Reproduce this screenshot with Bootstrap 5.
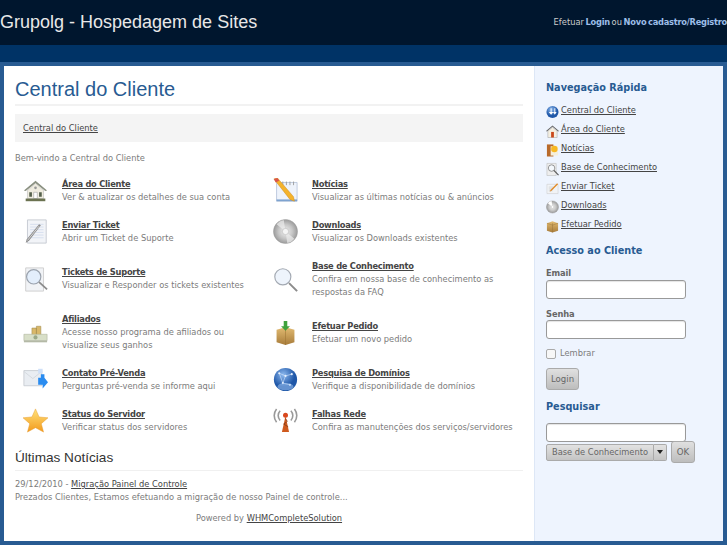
<!DOCTYPE html>
<html lang="pt"><head><meta charset="utf-8"><title>Grupolg</title>
<link href="https://cdn.jsdelivr.net/npm/bootstrap@5.3.0/dist/css/bootstrap.min.css" rel="stylesheet">
<style>
html,body{height:100%}
body{margin:0;width:727px;height:545px;overflow:hidden;background:#285b92;font:8.3px/13px "DejaVu Sans",sans-serif;color:#7c7c7c}
a{color:#444;text-decoration:underline}
.top-bar{height:45px;background:#00162e;color:#ccc}
.brand-name{font:18px/1 "Liberation Sans",sans-serif;color:#e8e8e8;margin:0 0 2px}
.top-login{word-spacing:-1px}
.top-login a{color:#9cbde8;font-weight:700;text-decoration:none;letter-spacing:-.25px}
.nav-band{height:17px;background:#003366}
.page-wrap{height:479px;margin:0 4px;border-top:4px solid #285b92}
.main-pane{width:530px;background:#fff;padding:0 11px}
.side-pane{width:189px;background:#eef4fe;border-left:1px solid #dde7f6;padding:0 0 0 11px}
.page-title{font:20px/24px "Liberation Sans",sans-serif;color:#285b92;margin:0;padding:11px 0 5px;border-bottom:2px solid #f2f2f2;height:40px}
.crumb-box{height:28px;margin-top:8px;background:#f4f4f4;padding:7px 8px;line-height:14px}
.welcome{margin:9px 0 0;height:14px;line-height:14px}
.link-grid{display:grid;grid-template-columns:250px 258px;margin-top:5px;height:271px;grid-template-rows:41px 41px 54px 53px 41px 41px}
.link-cell{display:flex;align-items:center}
.big-ico{width:40px;margin-right:7px;display:flex;justify-content:center;flex:none}
.big-ico svg{width:25px;height:25px}
.link-cell a{font-weight:700;display:block;letter-spacing:-.25px}
.link-cell p{margin:0}
.news-head{font:13.6px/20px "Liberation Sans",sans-serif;color:#333;margin:7px 0 0;height:23px;border-bottom:1px solid #f0f0f0}
.news-body{margin-top:7px}
.news-body p{margin:0}
.foot-line{text-align:center;margin-top:8px}
.side-title{font-size:9.7px;line-height:14px;font-weight:700;color:#285b92;margin:0}
.head-nav{margin-top:15px}
.head-login{margin-top:10px}
.head-search{margin-top:10px}
.quick-links{margin:6px 0 0;padding:0;list-style:none}
.quick-links li{height:19px;display:flex;align-items:center;gap:2px}
.quick-links svg{width:13px;height:14px;flex:none;margin-top:2px}
.field-lab{display:block;font-weight:700;color:#666;margin:8px 0 0;padding-top:1px;line-height:12px;letter-spacing:-.1px}
.field-box{display:block;width:140px;height:19px;border:1px solid #999;border-radius:3px;background:#fff;padding:0 3px;box-shadow:inset 0 1px 1px #e4e4e4}
.email-box{margin-top:1px}
.check-row{margin-top:8px;height:13px}
.fake-check{width:10px;height:10px;border:1px solid #aaa;border-radius:2px;background:#f7f7f7;flex:none;appearance:none;margin:0}
.grey-btn{background:linear-gradient(#e0e0e0,#bdbdbd);border:1px solid #aaa;border-radius:3px;color:#666;font:8.6px "DejaVu Sans",sans-serif;padding:0;height:22px}
.login-btn{width:33px;margin-top:8px}
.ok-btn{width:24px}
.search-form{margin-top:9px}
.sel-line{margin-top:-1px}
.sel-wrap{display:flex;width:121px;height:17px}
.sel-box{appearance:none;flex:1;min-width:0;border:1px solid #aaa;border-radius:2px 0 0 2px;background:linear-gradient(#e2e2e2,#c4c4c4);color:#666;font:8.3px "DejaVu Sans",sans-serif;padding:0 0 0 5px}
.sel-arrow{width:13px;border:1px solid #aaa;border-left:0;border-radius:0 2px 2px 0;background:linear-gradient(#e2e2e2,#c4c4c4);display:flex;align-items:center;justify-content:center}
.sel-arrow i{border:3px solid transparent;border-top:4px solid #222;border-bottom:0}
</style></head>
<body>
<svg width="0" height="0" class="position-absolute">
<defs>
<linearGradient id="gs" x1="0" y1="0" x2="0" y2="1"><stop offset="0" stop-color="#ffe27a"/><stop offset="1" stop-color="#f39a1c"/></linearGradient>
<radialGradient id="gg" cx=".4" cy=".3"><stop offset="0" stop-color="#8db9ee"/><stop offset="1" stop-color="#1f57a8"/></radialGradient>
<radialGradient id="gc" cx=".5" cy=".5"><stop offset="0" stop-color="#f2f2f2"/><stop offset=".6" stop-color="#c4c4c4"/><stop offset="1" stop-color="#9b9b9b"/></radialGradient>
<linearGradient id="gb" x1="0" y1="0" x2="0" y2="1"><stop offset="0" stop-color="#e2bb72"/><stop offset="1" stop-color="#a87c3a"/></linearGradient>
<symbol id="i-house" viewBox="0 0 28 28"><path d="M1 14 14 3l13 11-2 .5L14 6 3 14.500z" fill="#8a9080"/><path d="M5 14l9-8 9 8v9H5z" fill="#efecdf" stroke="#aaa" stroke-width=".5"/><path d="M12 16h4v7h-4z" fill="#fff" stroke="#888" stroke-width=".5"/><path d="M7 16h3v5H7zM18 16h3v5h-3z" fill="#55604c"/><circle cx="14" cy="11" r="1.500" fill="#999"/><path d="M3 23h22v3H3z" fill="#6b7250"/></symbol>
<symbol id="i-ticket" viewBox="0 0 28 28"><path d="M5 1h21v26H5z" fill="#f2f4f8" stroke="#c4c8d0"/><path d="M8 6h15M8 9h15M8 12h15M8 15h15M8 18h15M8 21h15" stroke="#cbd6ea" stroke-width=".8"/><path d="M20 7 7 24l-4 3 1-4L18 6z" fill="#8d8d8d"/><path d="M18 8 5 24" stroke="#ddd"/></symbol>
<symbol id="i-support" viewBox="0 0 28 28"><path d="M3 1h20v26H3z" fill="#f1f3f6" stroke="#ccc"/><circle cx="12" cy="11" r="8" fill="#e3eefb" stroke="#9aa2ad" stroke-width="1.3"/><path d="m18 17 9 8" stroke="#8b8b8b" stroke-width="2"/></symbol>
<symbol id="i-money" viewBox="0 0 28 28"><path d="M10 9h5v9h-5zM15 7h5v11h-5z" fill="#d9b86a" stroke="#a08b4e" stroke-width=".6"/><path d="M1 16h26v7H1z" fill="#d8dfc8" stroke="#a8ae98" stroke-width=".6"/><circle cx="14" cy="19.500" r="2.300" fill="#9aa887"/><path d="M1 23h26v2H1z" fill="#b4b9a6"/></symbol>
<symbol id="i-mail" viewBox="0 0 28 28"><path d="M1 4h20v17H1z" fill="#e9edf2" stroke="#c8ccd2"/><path d="M1 5l10 8 10-8" fill="none" stroke="#d2d6dc"/><path d="M17 2h5v5h-5z" fill="#cfe0f8"/><path d="M17 12h3V8h4v4l4 5-6 7v-4h-5z" fill="#2a8cf0"/></symbol>
<symbol id="i-star" viewBox="0 0 28 28"><path d="m14 1 4 9 10 1-7.500 6.500L23 27l-9-5-9 5 2.500-9.500L0 11l10-1z" fill="url(#gs)" stroke="#e79a2b" stroke-width=".5"/></symbol>
<symbol id="i-notes" viewBox="0 0 28 28"><path d="M4 5h23v21H4z" fill="#eef3fb" stroke="#b9c7dc"/><path d="M4 24h23v2H4z" fill="#7ea3d0"/><path d="M11 4v4M15 4v4M19 4v4M23 4v4" stroke="#999"/><path d="m1 1 4-1 18 21 1 5-5-2z" fill="#f4b32c" stroke="#c9861d" stroke-width=".5"/><path d="m1 1 4-1 2 3-4 2z" fill="#d9564a"/></symbol>
<symbol id="i-cd" viewBox="0 0 28 28"><circle cx="14" cy="14" r="13.500" fill="url(#gc)" stroke="#999" stroke-width=".5"/><path d="M14 14 4 6a13 13 0 0 1 8-5zM14 14l10 8a13 13 0 0 1-8 5z" fill="#eee" opacity=".7"/><circle cx="14" cy="14" r="3.500" fill="#f5f5f5" stroke="#aaa" stroke-width=".5"/></symbol>
<symbol id="i-search" viewBox="0 0 28 28"><circle cx="11" cy="11" r="9" fill="#eef4fc" stroke="#a3a9b2" stroke-width="1.300"/><path d="m18 18 9 9" stroke="#8b8b8b" stroke-width="2.200"/></symbol>
<symbol id="i-box" viewBox="0 0 28 28"><path d="M4 11 14 8l10 3v14l-10 3-10-3z" fill="url(#gb)"/><path d="M14 10v18" stroke="#9b7233" stroke-width=".6"/><path d="M12 7V1h4v6h3l-5 5-5-5z" fill="#3fa23c"/></symbol>
<symbol id="i-globe" viewBox="0 0 28 28"><circle cx="14" cy="14" r="13" fill="url(#gg)"/><path d="M7 7l7 3 7-2M14 10l-3 8 8 2M7 7l4 11" stroke="#cfe2fb" stroke-width=".7" fill="none"/><g fill="#e4effd"><circle cx="7" cy="7" r="1.200"/><circle cx="14" cy="10" r="1.200"/><circle cx="21" cy="8" r="1.200"/><circle cx="11" cy="18" r="1.200"/><circle cx="19" cy="20" r="1.200"/></g><ellipse cx="14" cy="22" rx="9" ry="4" fill="#a9cdf7" opacity=".5"/></symbol>
<symbol id="i-ant" viewBox="0 0 28 28"><path d="M14 9 18 27h-8z" fill="#cf5a1e"/><path d="M14 12l2 3-4 3 5 3" stroke="#8c3b12" fill="none"/><circle cx="14" cy="8" r="2.800" fill="#d9481e"/><g fill="none" stroke="#999" stroke-width="1.800"><path d="M8 3a8 8 0 0 0 0 11M20 3a8 8 0 0 1 0 11M4 1a12 12 0 0 0 0 15M24 1a12 12 0 0 1 0 15"/></g></symbol>
<symbol id="s-globe" viewBox="0 0 14 14"><circle cx="7" cy="7" r="6.500" fill="url(#gg)"/><path d="M5 3v4H3l2.500 3L8 7H6V3z" fill="#fff"/><path d="M10 3v4h1.500L9.500 10 7.500 7H9V3z" fill="#fff"/></symbol>
<symbol id="s-house" viewBox="0 0 14 14"><path d="M0 7 7 1l7 6-1 .5L7 2.500 1 7.500z" fill="#666"/><path d="M2 7l5-4 5 4v7H2z" fill="#f4efe2" stroke="#999" stroke-width=".5"/><path d="M5.500 8h3v6h-3z" fill="#c9471a"/></symbol>
<symbol id="s-news" viewBox="0 0 14 14"><path d="M1 1h7v13H1z" fill="#b86a2a"/><path d="M5 3h8v10H5z" fill="#f5efdc"/><circle cx="9" cy="6" r="3.500" fill="#f7b824"/></symbol>
<symbol id="s-kb" viewBox="0 0 14 14"><path d="M1 1h10v13H1z" fill="#eee" stroke="#bbb" stroke-width=".6"/><circle cx="6" cy="6" r="3.500" fill="#f4f8fc" stroke="#777" stroke-width=".8"/><path d="m8.500 8.500 5 5" stroke="#555" stroke-width="1.200"/></symbol>
<symbol id="s-tk" viewBox="0 0 14 14"><path d="M1 3h12v10H1z" fill="#f1f3f6" stroke="#ccc" stroke-width=".6"/><path d="M3 6h5M3 8h5M3 10h4" stroke="#bbb" stroke-width=".6"/><path d="m13 3-7 7-2 1 1-2 7-7z" fill="#e28a26"/></symbol>
<symbol id="s-cd" viewBox="0 0 14 14"><circle cx="7" cy="7" r="6.500" fill="url(#gc)" stroke="#999" stroke-width=".5"/><path d="M7 7 2 3a6.500 6.500 0 0 1 4-2.500z" fill="#fff"/><circle cx="7" cy="7" r="1.500" fill="#fff" stroke="#aaa" stroke-width=".4"/></symbol>
<symbol id="s-box" viewBox="0 0 14 14"><path d="M1 4l6-2 6 2v8l-6 2-6-2z" fill="url(#gb)"/><path d="M7 4v10M1 4l6 2 6-2" stroke="#8e6a33" stroke-width=".4" fill="none"/></symbol>
</defs></svg>

<header class="top-bar d-flex align-items-center justify-content-between">
  <h1 class="brand-name">Grupolg - Hospedagem de Sites</h1>
  <div class="top-login">Efetuar <a href="#">Login</a> ou <a href="#">Novo cadastro/Registro</a></div>
</header>
<div class="nav-band"></div>
<div class="page-wrap d-flex">
  <main class="main-pane">
    <h2 class="page-title">Central do Cliente</h2>
    <div class="crumb-box"><a href="#">Central do Cliente</a></div>
    <p class="welcome">Bem-vindo a Central do Cliente</p>
    <div class="link-grid">
      <div class="link-cell"><div class="big-ico"><svg><use href="#i-house"/></svg></div><div><a href="#">Área do Cliente</a><p>Ver &amp; atualizar os detalhes de sua conta</p></div></div>
      <div class="link-cell"><div class="big-ico"><svg><use href="#i-notes"/></svg></div><div><a href="#">Notícias</a><p>Visualizar as últimas notícias ou &amp; anúncios</p></div></div>
      <div class="link-cell"><div class="big-ico"><svg><use href="#i-ticket"/></svg></div><div><a href="#">Enviar Ticket</a><p>Abrir um Ticket de Suporte</p></div></div>
      <div class="link-cell"><div class="big-ico"><svg><use href="#i-cd"/></svg></div><div><a href="#">Downloads</a><p>Visualizar os Downloads existentes</p></div></div>
      <div class="link-cell"><div class="big-ico"><svg><use href="#i-support"/></svg></div><div><a href="#">Tickets de Suporte</a><p>Visualizar e Responder os tickets existentes</p></div></div>
      <div class="link-cell"><div class="big-ico"><svg><use href="#i-search"/></svg></div><div><a href="#">Base de Conhecimento</a><p>Confira em nossa base de conhecimento as<br>respostas da FAQ</p></div></div>
      <div class="link-cell"><div class="big-ico"><svg><use href="#i-money"/></svg></div><div><a href="#">Afiliados</a><p>Acesse nosso programa de afiliados ou<br>visualize seus ganhos</p></div></div>
      <div class="link-cell"><div class="big-ico"><svg><use href="#i-box"/></svg></div><div><a href="#">Efetuar Pedido</a><p>Efetuar um novo pedido</p></div></div>
      <div class="link-cell"><div class="big-ico"><svg><use href="#i-mail"/></svg></div><div><a href="#">Contato Pré-Venda</a><p>Perguntas pré-venda se informe aqui</p></div></div>
      <div class="link-cell"><div class="big-ico"><svg><use href="#i-globe"/></svg></div><div><a href="#">Pesquisa de Domínios</a><p>Verifique a disponibilidade de domínios</p></div></div>
      <div class="link-cell"><div class="big-ico"><svg><use href="#i-star"/></svg></div><div><a href="#">Status do Servidor</a><p>Verificar status dos servidores</p></div></div>
      <div class="link-cell"><div class="big-ico"><svg><use href="#i-ant"/></svg></div><div><a href="#">Falhas Rede</a><p>Confira as manutenções dos serviços/servidores</p></div></div>
    </div>
    <h3 class="news-head">Últimas Notícias</h3>
    <div class="news-body">
      <p>29/12/2010 - <a href="#">Migração Painel de Controle</a></p>
      <p>Prezados Clientes, Estamos efetuando a migração de nosso Painel de controle...</p>
    </div>
    <p class="foot-line">Powered by <a href="#">WHMCompleteSolution</a></p>
  </main>
  <aside class="side-pane">
    <h3 class="side-title head-nav">Navegação Rápida</h3>
    <ul class="quick-links">
      <li><svg><use href="#s-globe"/></svg><a href="#">Central do Cliente</a></li>
      <li><svg><use href="#s-house"/></svg><a href="#">Área do Cliente</a></li>
      <li><svg><use href="#s-news"/></svg><a href="#">Notícias</a></li>
      <li><svg><use href="#s-kb"/></svg><a href="#">Base de Conhecimento</a></li>
      <li><svg><use href="#s-tk"/></svg><a href="#">Enviar Ticket</a></li>
      <li><svg><use href="#s-cd"/></svg><a href="#">Downloads</a></li>
      <li><svg><use href="#s-box"/></svg><a href="#">Efetuar Pedido</a></li>
    </ul>
    <h3 class="side-title head-login">Acesso ao Cliente</h3>
    <form>
      <label class="field-lab">Email</label>
      <input class="field-box email-box" type="text">
      <label class="field-lab">Senha</label>
      <input class="field-box" type="password">
      <div class="d-flex align-items-center gap-1 check-row"><input type="checkbox" class="fake-check"><span>Lembrar</span></div>
      <button type="button" class="grey-btn login-btn">Login</button>
    </form>
    <h3 class="side-title head-search">Pesquisar</h3>
    <form class="search-form">
      <input class="field-box" type="text">
      <div class="d-flex gap-1 align-items-center sel-line"><div class="sel-wrap"><select class="sel-box"><option>Base de Conhecimento</option></select><span class="sel-arrow"><i></i></span></div><button type="button" class="grey-btn ok-btn">OK</button></div>
    </form>
  </aside>
</div>
</body></html>
